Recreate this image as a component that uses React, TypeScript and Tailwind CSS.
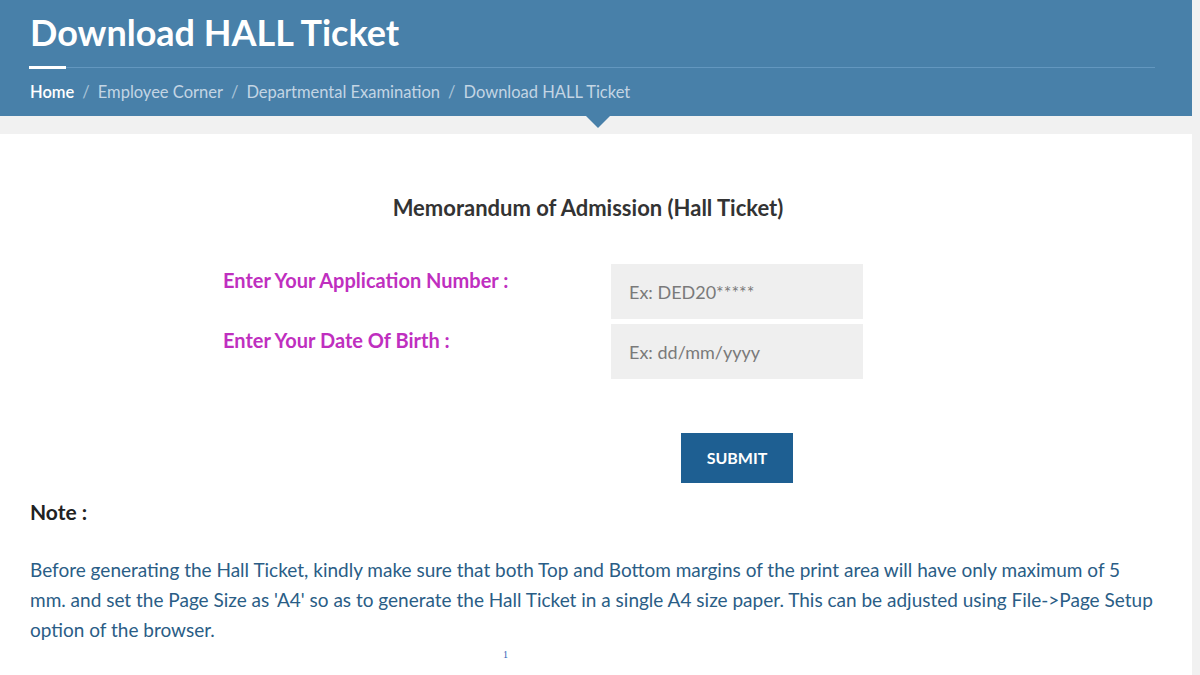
export default function App() {
  return (
    <div
      className="min-h-screen bg-[#f1f1f1] pr-2"
      style={{ fontFamily: 'Lato, "Open Sans", sans-serif' }}
    >
      {/* Page banner */}
      <div className="relative h-[116px] bg-[#4880a9] px-[30px] pt-[10px]">
        <h1 className="text-[36px] leading-[44px] font-bold text-white">Download HALL Ticket</h1>
        <div className="mt-[12px] flex items-center pr-[7px]">
          <div className="h-[3px] w-[37px] -ml-px bg-white" />
          <div className="h-px flex-1 bg-[#6397bf]" />
        </div>
        <nav className="mt-[12px] flex items-center text-[16.5px] leading-[22px]">
          <span className="font-semibold text-white">Home</span>
          <span className="mx-[8px] text-[#a9c3d8]">/</span>
          <span className="text-[#c3d5e4]">Employee Corner</span>
          <span className="mx-[8px] text-[#a9c3d8]">/</span>
          <span className="text-[#c3d5e4]">Departmental Examination</span>
          <span className="mx-[8px] text-[#a9c3d8]">/</span>
          <span className="text-[#c3d5e4]">Download HALL Ticket</span>
        </nav>
        <div className="absolute left-[586px] top-[116px] h-0 w-0 border-x-[12px] border-t-[12px] border-x-transparent border-t-[#4880a9]" />
      </div>

      {/* Content panel */}
      <div className="mt-[18px] bg-white px-[30px] pt-[59px] pb-[30px]">
        <h2 className="text-center text-[22px] leading-[30px] font-bold text-[#333] pr-[16px]">
          Memorandum of Admission (Hall Ticket)
        </h2>

        <div className="mt-[41px] ml-[193px] flex flex-col gap-[5px]">
          <div className="flex">
            <label className="w-[388px] pt-[4px] text-[20px] leading-[24px] font-bold text-[#bf2fbf]">
              Enter Your Application Number :
            </label>
            <input
              placeholder="Ex: DED20*****"
              className="h-[55px] w-[252px] bg-[#efefef] px-[18px] text-[18px] text-[#555] outline-none placeholder:text-[#7a7a7a]"
            />
          </div>
          <div className="flex">
            <label className="w-[388px] pt-[4px] text-[20px] leading-[24px] font-bold text-[#bf2fbf]">
              Enter Your Date Of Birth :
            </label>
            <input
              placeholder="Ex: dd/mm/yyyy"
              className="h-[55px] w-[252px] bg-[#efefef] px-[18px] text-[18px] text-[#555] outline-none placeholder:text-[#7a7a7a]"
            />
          </div>
        </div>

        <div className="mt-[54px] ml-[651px]">
          <button className="h-[50px] w-[112px] bg-[#1e5f92] text-[16px] font-bold text-white">
            SUBMIT
          </button>
        </div>

        <h3 className="mt-[16px] text-[21px] leading-[26px] font-bold text-[#222]">Note :</h3>

        <p className="mt-[30px] max-w-[1126px] text-[19px] leading-[30px] text-[#2a5d86]">
          Before generating the Hall Ticket, kindly make sure that both Top and Bottom margins of the print area will
          have only maximum of 5 mm. and set the Page Size as 'A4' so as to generate the Hall Ticket in a single A4 size
          paper. This can be adjusted using File-&gt;Page Setup option of the browser.
        </p>
        <div
          className="ml-[473px] mt-[2px] text-[10px] text-[#2b63b8]"
          style={{ fontFamily: '"Liberation Serif", serif' }}
        >
          1
        </div>
      </div>
    </div>
  )
}
